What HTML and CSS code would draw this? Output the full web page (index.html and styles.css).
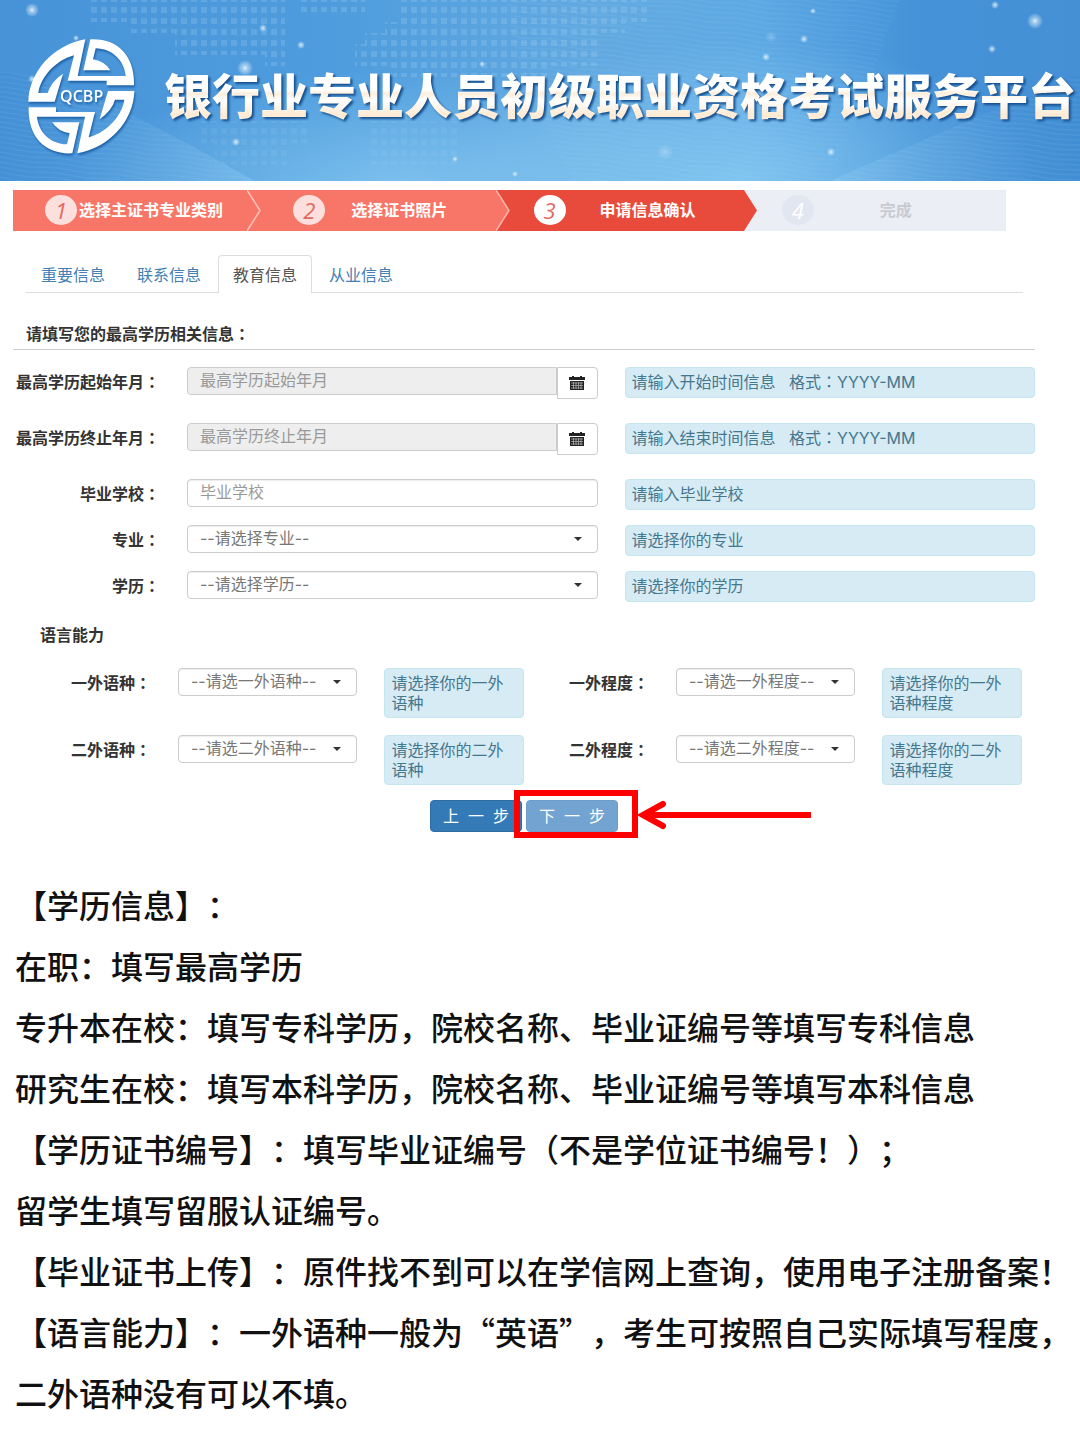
FILE: index.html
```html
<!DOCTYPE html>
<html lang="zh-CN">
<head>
<meta charset="utf-8">
<meta name="viewport" content="width=device-width, initial-scale=1">
<title>银行业专业人员初级职业资格考试服务平台</title>
<link rel="stylesheet" href="styles.css">
</head>
<body>
<header class="banner">
  <svg class="banner-art" viewBox="0 0 1080 181" preserveAspectRatio="xMidYMid slice" aria-hidden="true">
    <defs>
      <linearGradient id="sky" x1="0" x2="1" y1="0" y2="0">
        <stop offset="0" stop-color="#4893d8"/>
        <stop offset=".3" stop-color="#4e9cdd"/>
        <stop offset=".55" stop-color="#62a9e1"/>
        <stop offset=".7" stop-color="#5ea9e4"/>
        <stop offset=".85" stop-color="#4592d8"/>
        <stop offset="1" stop-color="#4590d5"/>
      </linearGradient>
      <radialGradient id="glow" cx=".5" cy=".5" r=".5">
        <stop offset="0" stop-color="#8fd0f5" stop-opacity=".7"/>
        <stop offset="1" stop-color="#8fd0f5" stop-opacity="0"/>
      </radialGradient>
      <radialGradient id="star" cx=".5" cy=".5" r=".5">
        <stop offset="0" stop-color="#fff" stop-opacity=".9"/>
        <stop offset=".3" stop-color="#dff2ff" stop-opacity=".6"/>
        <stop offset="1" stop-color="#fff" stop-opacity="0"/>
      </radialGradient>
      <pattern id="dots" width="10" height="11" patternUnits="userSpaceOnUse">
        <rect x="1" y="7" width="6" height="6" fill="#b5dcf6" opacity=".2"/>
        <rect x="1" y="-4" width="6" height="6" fill="#b5dcf6" opacity=".2"/>
      </pattern>
      <pattern id="ripples" width="60" height="5" patternUnits="userSpaceOnUse" patternTransform="rotate(6)">
        <path d="M0 2Q15 0 30 2T60 2" fill="none" stroke="#a8d8f8" stroke-width="1" opacity=".13"/>
      </pattern>
      <linearGradient id="wave" x1="0" x2="1"><stop offset="0" stop-color="#3382cc" stop-opacity=".2"/><stop offset="1" stop-color="#9bd5f7" stop-opacity=".3"/></linearGradient>
      <linearGradient id="wave2" x1="0" x2="1"><stop offset="0" stop-color="#9bd5f7" stop-opacity=".3"/><stop offset="1" stop-color="#3382cc" stop-opacity=".2"/></linearGradient>
    </defs>
    <rect width="1080" height="181" fill="url(#sky)"/>
    <ellipse cx="400" cy="190" rx="330" ry="120" fill="url(#glow)"/>
    <ellipse cx="740" cy="180" rx="300" ry="140" fill="url(#glow)"/>
    <path fill="url(#dots)" d="M90 0H285V66H265V55H175V33H130V22H90ZM297 0H365V12H297ZM400 0H650V22H625V33H600V66H550V77H390V66H355V44H365V33H385V22H400Z"/>
    <path fill="url(#dots)" opacity=".5" d="M200 121H310V143H290V165H215V143H200ZM370 121H460V165H370Z"/>
    <path fill="url(#wave)" d="M0 70C80 80 190 145 255 181H0Z"/>
    <path fill="url(#ripples)" d="M0 70C80 80 190 145 255 181H0Z"/>
    <path fill="url(#wave2)" d="M830 181C900 150 980 115 1080 75V181Z"/>
    <path fill="url(#ripples)" d="M830 181C900 150 980 115 1080 75V181Z"/>
    <path fill="url(#ripples)" d="M505 0C515 70 545 130 573 181H830L900 0Z"/>
    <g fill="url(#star)">
      <circle cx="32" cy="10" r="7"/><circle cx="245" cy="68" r="8"/><circle cx="1035" cy="21" r="8"/>
      <circle cx="76" cy="38" r="3"/><circle cx="32" cy="79" r="4"/><circle cx="263" cy="28" r="4"/>
      <circle cx="301" cy="45" r="4"/><circle cx="236" cy="142" r="4"/><circle cx="455" cy="159" r="3"/>
      <circle cx="482" cy="64" r="3"/><circle cx="515" cy="174" r="3"/><circle cx="766" cy="57" r="4"/>
      <circle cx="804" cy="39" r="4"/><circle cx="813" cy="11" r="3"/><circle cx="831" cy="152" r="4"/>
      <circle cx="992" cy="49" r="4"/><circle cx="995" cy="5" r="4"/><circle cx="665" cy="152" r="8" opacity=".35"/>
      <circle cx="771" cy="37" r="6" opacity=".3"/>
    </g>
  </svg>
  <svg class="logo" viewBox="0 0 420 405" role="img" aria-label="QCBP">
    <g fill="#fff">
      <path d="M211 28C115 45 42 125 40 215H119L144 131Q108 155 98 189H70C76 145 118 92 177 76L158 152H275V166H357C360 80 310 24 226 28L205 121H286Q270 94 234 88L242 55C292 56 328 92 332 138H188Z"/>
      <path d="M211 28C115 45 42 125 40 215H119L144 131Q108 155 98 189H70C76 145 118 92 177 76L158 152H275V166H357C360 80 310 24 226 28L205 121H286Q270 94 234 88L242 55C292 56 328 92 332 138H188Z" transform="rotate(180 199 199)"/>
      <text class="logo-text" x="200" y="217" text-anchor="middle">QCBP</text>
    </g>
  </svg>
  <h1 class="banner-title">银行业专业人员初级职业资格考试服务平台</h1>
</header>

<main>
  <ol class="steps">
    <li class="step step-done"><span class="step-number">1</span><span class="step-name">选择主证书专业类别</span>
      <svg class="step-tip" viewBox="0 0 14 41" aria-hidden="true"><path d="M0 0L13 20.500L0 41" fill="none" stroke="#fcc4bc" stroke-width="1.500"/></svg></li>
    <li class="step step-done"><span class="step-number">2</span><span class="step-name">选择证书照片</span>
      <svg class="step-tip" viewBox="0 0 14 41" aria-hidden="true"><path d="M0 0H14V41H0L13 20.500Z" fill="#e84b3b"/><path d="M0 0L13 20.500L0 41" fill="none" stroke="#fcb4aa" stroke-width="1.500"/></svg></li>
    <li class="step step-current" aria-current="step"><span class="step-number">3</span><span class="step-name">申请信息确认</span>
      <svg class="step-tip" viewBox="0 0 14 41" aria-hidden="true"><path d="M0 0H14V41H0L13 20.500Z" fill="#ebeef5"/></svg></li>
    <li class="step step-todo"><span class="step-number">4</span><span class="step-name">完成</span></li>
  </ol>

  <nav class="tabs">
    <a class="tab" href="#important">重要信息</a>
    <a class="tab" href="#contact">联系信息</a>
    <a class="tab tab-active" href="#education" aria-current="page">教育信息</a>
    <a class="tab" href="#career">从业信息</a>
  </nav>

  <form class="form" id="education">
    <h2 class="form-title">请填写您的最高学历相关信息<span class="colon" lang="zh-TW">：</span></h2>

    <div class="row row-date">
      <label class="label" for="start">最高学历起始年月<span class="colon" lang="zh-TW">：</span></label>
      <div class="date">
        <input class="control" id="start" type="text" placeholder="最高学历起始年月" readonly>
        <button class="date-button" type="button" aria-label="选择起始年月">
          <svg class="calendar" viewBox="0 0 16 16" aria-hidden="true"><path fill="#222" d="M0 2H3V1H5V2H11V1H13V2H16V5H0Z"/><path fill="#222" d="M1 6H15V15H1Z"/><path stroke="#bbb" stroke-width=".7" d="M2 8H14M2 10.500H14M2 13H14M4.500 7V14M7 7V14M9.500 7V14M12 7V14"/></svg>
        </button>
      </div>
      <p class="hint">请输入开始时间信息&nbsp;&nbsp; 格式<span class="colon" lang="zh-TW">：</span>YYYY-MM</p>
    </div>
    <div class="row row-date">
      <label class="label" for="end">最高学历终止年月<span class="colon" lang="zh-TW">：</span></label>
      <div class="date">
        <input class="control" id="end" type="text" placeholder="最高学历终止年月" readonly>
        <button class="date-button" type="button" aria-label="选择终止年月">
          <svg class="calendar" viewBox="0 0 16 16" aria-hidden="true"><path fill="#222" d="M0 2H3V1H5V2H11V1H13V2H16V5H0Z"/><path fill="#222" d="M1 6H15V15H1Z"/><path stroke="#bbb" stroke-width=".7" d="M2 8H14M2 10.500H14M2 13H14M4.500 7V14M7 7V14M9.500 7V14M12 7V14"/></svg>
        </button>
      </div>
      <p class="hint">请输入结束时间信息&nbsp;&nbsp; 格式<span class="colon" lang="zh-TW">：</span>YYYY-MM</p>
    </div>
    <div class="row">
      <label class="label" for="school">毕业学校<span class="colon" lang="zh-TW">：</span></label>
      <input class="control" id="school" type="text" placeholder="毕业学校">
      <p class="hint">请输入毕业学校</p>
    </div>
    <div class="row">
      <label class="label" for="major">专业<span class="colon" lang="zh-TW">：</span></label>
      <div class="select"><select class="control" id="major"><option>--请选择专业--</option></select></div>
      <p class="hint">请选择你的专业</p>
    </div>
    <div class="row">
      <label class="label" for="degree">学历<span class="colon" lang="zh-TW">：</span></label>
      <div class="select"><select class="control" id="degree"><option>--请选择学历--</option></select></div>
      <p class="hint">请选择你的学历</p>
    </div>

    <h3 class="section-title">语言能力</h3>
    <div class="languages">
      <div class="language">
        <label class="label" for="lang1">一外语种<span class="colon" lang="zh-TW">：</span></label>
        <div class="select"><select class="control" id="lang1"><option>--请选一外语种--</option></select></div>
        <p class="hint">请选择你的一外语种</p>
      </div>
      <div class="language">
        <label class="label" for="level1">一外程度<span class="colon" lang="zh-TW">：</span></label>
        <div class="select"><select class="control" id="level1"><option>--请选一外程度--</option></select></div>
        <p class="hint">请选择你的一外语种程度</p>
      </div>
      <div class="language">
        <label class="label" for="lang2">二外语种<span class="colon" lang="zh-TW">：</span></label>
        <div class="select"><select class="control" id="lang2"><option>--请选二外语种--</option></select></div>
        <p class="hint">请选择你的二外语种</p>
      </div>
      <div class="language">
        <label class="label" for="level2">二外程度<span class="colon" lang="zh-TW">：</span></label>
        <div class="select"><select class="control" id="level2"><option>--请选二外程度--</option></select></div>
        <p class="hint">请选择你的二外语种程度</p>
      </div>
    </div>

    <div class="actions">
      <button class="button" type="button">上&nbsp;&nbsp;一&nbsp;&nbsp;步</button>
      <div class="callout">
        <button class="button button-next" type="submit">下&nbsp;&nbsp;一&nbsp;&nbsp;步</button>
        <span class="callout-frame"></span>
        <svg class="callout-arrow" viewBox="0 0 174 30" aria-hidden="true"><path d="M6 15H173" stroke="#f00" stroke-width="6"/><path d="M25 4L5 15L25 26" fill="none" stroke="#f00" stroke-width="6" stroke-linecap="round"/></svg>
      </div>
    </div>
  </form>

  <section class="notes">
    <p>【学历信息】：</p>
    <p>在职：填写最高学历</p>
    <p>专升本在校：填写专科学历，院校名称、毕业证编号等填写专科信息</p>
    <p>研究生在校：填写本科学历，院校名称、毕业证编号等填写本科信息</p>
    <p>【学历证书编号】：填写毕业证编号（不是学位证书编号！）；</p>
    <p>留学生填写留服认证编号。</p>
    <p>【毕业证书上传】：原件找不到可以在学信网上查询，使用电子注册备案！</p>
    <p>【语言能力】：一外语种一般为“英语”，考生可按照自己实际填写程度，二外语种没有可以不填。</p>
  </section>
</main>
</body>
</html>
```
FILE: styles.css
```css
* {
  box-sizing: border-box;
}

body {
  margin: 0;
  background: #fff;
  color: #333;
  font: 16px/20px Inter, "Noto Sans CJK SC", sans-serif;
}

h1, h2, h3, p, ol {
  margin: 0;
  padding: 0;
}

button, input, select {
  font: inherit;
}

/* Banner */
.banner {
  position: relative;
  display: flex;
  align-items: center;
  gap: 9px;
  height: 181px;
  padding-left: 15px;
  overflow: hidden;
}

.banner-art {
  position: absolute;
  inset: 0;
  width: 100%;
  height: 100%;
}

.logo {
  position: relative;
  flex: none;
  width: 140px;
  height: 135px;
  margin-top: 14px;
  filter: drop-shadow(1px 2px 1px #1d62a8);
}

.logo-text {
  font: 600 48px "Open Sans", sans-serif;
}

.banner-title {
  position: relative;
  color: transparent;
  background: linear-gradient(#fff 45%, #fdeedb 51%, #fff 60%, #fdebd5 80%);
  -webkit-background-clip: text;
  background-clip: text;
  filter: drop-shadow(2px 2px 1px #164f8e);
  font: 900 48px/70px "Noto Sans CJK SC", sans-serif;
  margin-top: 4px;
  white-space: nowrap;
}

/* Progress */
.steps {
  display: grid;
  grid-template-columns: repeat(4, 1fr);
  margin: 9px 74px 0 13px;
  list-style: none;
}

.step {
  position: relative;
  height: 41px;
  padding-left: 28px;
  color: #fff;
  font-weight: 700;
  line-height: 40px;
  text-align: center;
}

.step-done { background: #f87668; }
.step-current { background: #e84b3b; }
.step-todo { background: #ebeef5; color: #c9cbd0; }

.step-number {
  position: absolute;
  top: 5px;
  left: 24px;
  width: 32px;
  height: 30px;
  border-radius: 50%;
  background: #fff;
  color: #e2695f;
  font: italic 400 22px/30px "Open Sans", sans-serif;
}

.step-done .step-number {
  left: 32px;
  background: #fde0dd;
}

.step-todo .step-number {
  background: #e2e6f0;
  color: #fff;
}

.step-name {
  position: relative;
}

.step-tip {
  position: absolute;
  top: 0;
  right: 0;
  width: 14px;
  height: 41px;
}

/* Tabs */
.tabs {
  display: flex;
  gap: 2px;
  margin: 24px 57px 0 26px;
  border-bottom: 1px solid #ddd;
}

.tab {
  height: 37px;
  padding: 0 14px;
  border: 1px solid transparent;
  border-bottom: 0;
  color: #4380b4;
  line-height: 38px;
  text-decoration: none;
}

.tab-active {
  height: 38px;
  margin-bottom: -1px;
  border-color: #ddd;
  border-radius: 4px 4px 0 0;
  background: #fff;
  color: #555;
}

/* Form */
.form {
  margin: 31px 45px 0 13px;
}

.form-title {
  margin-bottom: 17px;
  padding: 0 0 5px 13px;
  border-bottom: 1px solid #ccc;
  font-size: 16px;
  line-height: 20px;
}

/* Colon centred in its em square */
.colon {
  font-family: "Noto Sans CJK TC", sans-serif;
  line-height: 1;
}

.row {
  display: grid;
  grid-template-columns: 147px 1fr 1fr;
  column-gap: 27px;
  align-items: start;
  margin-bottom: 15px;
}

.row-date {
  margin-bottom: 25px;
}

.label {
  font-weight: 700;
  line-height: 31px;
  text-align: right;
  white-space: nowrap;
}

.control {
  display: block;
  width: 100%;
  height: 28px;
  padding: 0 12px 2px;
  border: 1px solid #ccc;
  border-radius: 4px;
  background: #fff;
  box-shadow: inset 0 1px 1px #eee;
  color: #777;
  appearance: none;
}

.control::placeholder {
  color: #999;
}

.control[readonly] {
  background: #eee;
  border-radius: 4px 0 0 4px;
}

.date {
  display: flex;
  height: 31px;
}

.date-button {
  flex: none;
  display: grid;
  place-items: center;
  width: 41px;
  height: 32px;
  padding: 0;
  border: 1px solid #ccc;
  border-radius: 0 4px 4px 0;
  background: #fff;
}

.calendar {
  width: 16px;
  height: 16px;
}

.select {
  position: relative;
}

.select::after {
  content: "";
  position: absolute;
  top: 12px;
  right: 16px;
  border: 4px solid transparent;
  border-top-color: #333;
  border-bottom: 0;
  pointer-events: none;
}

.hint {
  min-height: 31px;
  padding: 4px 6px;
  border: 1px solid #c3e6f0;
  border-radius: 4px;
  background: #d7ebf5;
  color: #44788f;
}

.section-title {
  margin: 23px 0 23px 27px;
  font-size: 16px;
  line-height: 20px;
}

.languages {
  display: grid;
  grid-template-columns: 1fr 1fr;
  gap: 17px 14px;
  margin: 0 13px 0 27px;
}

.language {
  display: grid;
  grid-template-columns: 111px 9fr 7fr;
  column-gap: 27px;
  align-items: start;
}

.actions {
  display: flex;
  justify-content: center;
  gap: 4px;
  margin-top: 15px;
}

.button {
  display: block;
  width: 92px;
  height: 32px;
  padding: 0;
  border: 1px solid #2e6da4;
  border-radius: 4px;
  background: #337ab7;
  color: #fff;
}

.button-next {
  border-color: #6c9cc8;
  background: #73a3d0;
}

.callout {
  position: relative;
}

.callout-frame {
  position: absolute;
  inset: -10px -20px -6px -12px;
  border: 6px solid #f00;
  pointer-events: none;
}

.callout-arrow {
  position: absolute;
  top: 0;
  left: 112px;
  width: 174px;
  height: 30px;
}

/* Notes */
.notes {
  margin-top: 42px;
  padding: 0 0 22px 15px;
  color: #111;
  font: 500 32px/61px "Noto Sans CJK SC", sans-serif;
  text-spacing-trim: space-all;
}
```
